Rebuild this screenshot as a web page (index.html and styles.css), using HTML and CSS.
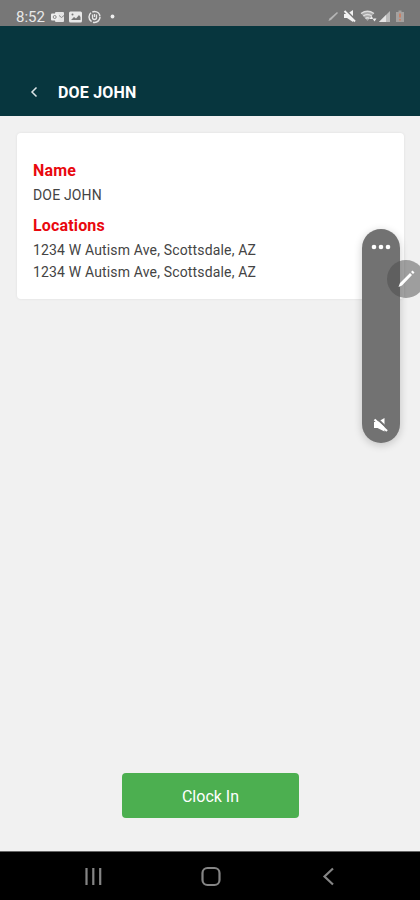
FILE: index.html
```
<!DOCTYPE html>
<html lang="en">
<head>
<meta charset="utf-8">
<title>DOE JOHN</title>
<link rel="stylesheet" href="styles.css">
</head>
<body>

<div class="status-bar">
  <span class="time">8:52</span>
  <svg class="status-left" width="70" height="14" viewBox="0 0 70 14">
    <!-- outlook -->
    <rect x="4" y="2" width="9" height="10" rx="1" fill="#e4e4e4"/>
    <path d="M8 5.500l2.500 2L13 5.500" fill="none" stroke="#888"/>
    <rect x="0" y="3.500" width="7.500" height="7" rx="1" fill="#eee"/>
    <circle cx="3.700" cy="7" r="1.500" fill="none" stroke="#888"/>
    <!-- gallery -->
    <rect x="18" y="1.500" width="13" height="11" rx="1.500" fill="#e8e8e8"/>
    <path d="M20 10l3-3 2 1.500 3-3.500 1.500 2V10z" fill="#777"/>
    <circle cx="21.500" cy="4.500" r="1" fill="#777"/>
    <!-- app notification -->
    <circle cx="43.500" cy="7" r="5.500" fill="none" stroke="#e6e6e6" stroke-width="1.500" stroke-dasharray="10 1.500"/>
    <path d="M41.500 4.500v3a2 2 0 0 0 4 0v-3M43.500 4v3" fill="none" stroke="#e6e6e6" stroke-width="1.300"/>
    <circle cx="61.500" cy="6.500" r="1.900" fill="#eee"/>
  </svg>
  <svg class="status-right" width="80" height="16" viewBox="0 0 80 16">
    <path d="M1.500 13l1-2.500L10 4l1 1-7 7z" fill="#b5b5b5"/>
    <path d="M17 6h3l6-4v12l-6-4h-3z" fill="#f2f2f2"/>
    <path d="M18.500 2l10 10" stroke="#777" stroke-width="1.800"/>
    <path d="M17.500 3l10.500 10.500" stroke="#f2f2f2" stroke-width="2"/>
    <path d="M34 5.500q6.500-4.500 13 0L40.500 13z" fill="#aaa"/>
    <path d="M34 5.500q6.500-4.500 13 0M36.300 8q4.200-3 8.400 0M38.500 10.500q2-1.500 4 0" fill="none" stroke="#ddd" stroke-width="1.300"/>
    <path d="M42.500 11l2-3 2 3zM45.500 10.500l2 3 2-3z" fill="#eee"/>
    <path d="M52 14L63 3v11z" fill="#bbb"/>
    <path d="M52 14l7-7v7z" fill="#e4e4e4"/>
    <path d="M69 4h2.500V2.500h3V4H77v10h-8z" fill="#a5a19f"/>
    <path d="M73 5.500v4M73 11v1.500" stroke="#c78066" stroke-width="2"/>
  </svg>
</div>

<header class="header">
  <svg width="10" height="14" viewBox="0 0 10 14">
    <path d="M7.500 1.500L3 6l4.500 4.500" fill="none" stroke="#dce5e7" stroke-width="1.500"/>
  </svg>
  <h1>DOE JOHN</h1>
</header>

<main class="content">
  <div class="card">
    <h2>Name</h2>
    <p>DOE JOHN</p>
    <h2>Locations</h2>
    <p>1234 W Autism Ave, Scottsdale, AZ</p>
    <p>1234 W Autism Ave, Scottsdale, AZ</p>
  </div>
  <button class="button">Clock In</button>
</main>

<nav class="nav-bar">
  <svg width="24" height="24" viewBox="0 0 24 24">
    <path d="M5.500 4v17M12.300 4v17M19.200 4v17" stroke="#858585" stroke-width="2.200"/>
  </svg>
  <svg width="24" height="24" viewBox="0 0 24 24">
    <rect x="3.500" y="4" width="17" height="17" rx="5" fill="none" stroke="#858585" stroke-width="2.200"/>
  </svg>
  <svg width="24" height="24" viewBox="0 0 24 24">
    <path d="M16 4.500L7.500 12.500l8.500 8" fill="none" stroke="#858585" stroke-width="2.200"/>
  </svg>
</nav>

<!-- floating recorder controls -->
<div class="recorder">
  <svg width="20" height="6" viewBox="0 0 20 6">
    <circle cx="3" cy="3" r="2.300" fill="#fff"/>
    <circle cx="10" cy="3" r="2.300" fill="#fff"/>
    <circle cx="17" cy="3" r="2.300" fill="#fff"/>
  </svg>
  <svg width="16" height="16" viewBox="0 0 16 16">
    <path d="M1 5h3.500L11.500 1v13.500L4.500 11H1z" fill="#fff"/>
    <path d="M3.500 1L15 12" stroke="#727272" stroke-width="2"/>
    <path d="M1.500 2.500L14 14" stroke="#fff" stroke-width="2.200"/>
  </svg>
</div>
<div class="pen">
  <svg width="20" height="20" viewBox="0 0 20 20">
    <path d="M2.500 18l1.500-4L14 4l2 2L6 16.500zM15 3l1.500-1.500 2 2L17 5z" fill="#fff"/>
  </svg>
</div>

</body>
</html>
```

FILE: styles.css
```
body {
  margin: 0;
  height: 900px;
  display: flex;
  flex-direction: column;
  position: relative;
  overflow: hidden;
  font-family: Roboto, "Liberation Sans", sans-serif;
  background-color: #f1f1f1;
}

svg {
  display: block;
}

h1, h2, p {
  margin: 0;
}

.status-bar {
  height: 26px;
  box-sizing: border-box;
  padding: 8px 13px 0 16px;
  display: flex;
  background-color: #777;
}

.time {
  width: 35px;
  font-size: 15px;
  line-height: 19px;
  color: #e8e8e8;
}

.status-left {
  margin-top: 2px;
}

.status-right {
  margin-left: auto;
}

.header {
  height: 90px;
  box-sizing: border-box;
  padding: 43px 0 0 29px;
  display: flex;
  align-items: center;
  gap: 19px;
  background-color: #07363e;
}

.header h1 {
  font-size: 16px;
  line-height: 20px;
  padding-top: 1px;
  font-weight: bold;
  letter-spacing: 0.2px;
  color: white;
}

.content {
  flex: 1;
  display: flex;
  flex-direction: column;
  align-items: center;
  padding: 17px 16px 33px 17px;
}

.card {
  align-self: stretch;
  height: 166px;
  box-sizing: border-box;
  padding: 27px 16px 0;
  border-radius: 4px;
  background-color: white;
  box-shadow: 0 0 3px rgba(0,0,0,0.08);
}

.card h2 {
  font-size: 16px;
  line-height: 22px;
  letter-spacing: 0.15px;
  color: #e9080e;
}

.card p {
  font-size: 14px;
  line-height: 22px;
  margin-top: 2px;
  letter-spacing: 0.16px;
  color: #444;
}

.card p + h2 {
  margin-top: 9px;
}

.card p + p {
  margin-top: 0;
}

.button {
  width: 177px;
  height: 45px;
  margin-top: auto;
  padding: 2px 0 0;
  border: none;
  border-radius: 4px;
  font-family: inherit;
  font-size: 16px;
  color: white;
  background-color: #4caf50;
}

.nav-bar {
  height: 49px;
  box-sizing: border-box;
  border-top: 1px solid #666;
  padding: 0 79px 0 81px;
  display: flex;
  justify-content: space-between;
  align-items: center;
  background-color: black;
}

.recorder {
  position: absolute;
  left: 362px;
  top: 229px;
  width: 38px;
  height: 214px;
  box-sizing: border-box;
  padding: 15px 0 10px;
  display: flex;
  flex-direction: column;
  justify-content: space-between;
  align-items: center;
  border-radius: 19px;
  background-color: #727272;
  box-shadow: 0 2px 8px rgba(0,0,0,0.2);
}

.pen {
  position: absolute;
  left: 387px;
  top: 260px;
  width: 38px;
  height: 38px;
  display: flex;
  justify-content: center;
  align-items: center;
  border-radius: 50%;
  background-color: rgba(75,75,75,0.5);
}
```
